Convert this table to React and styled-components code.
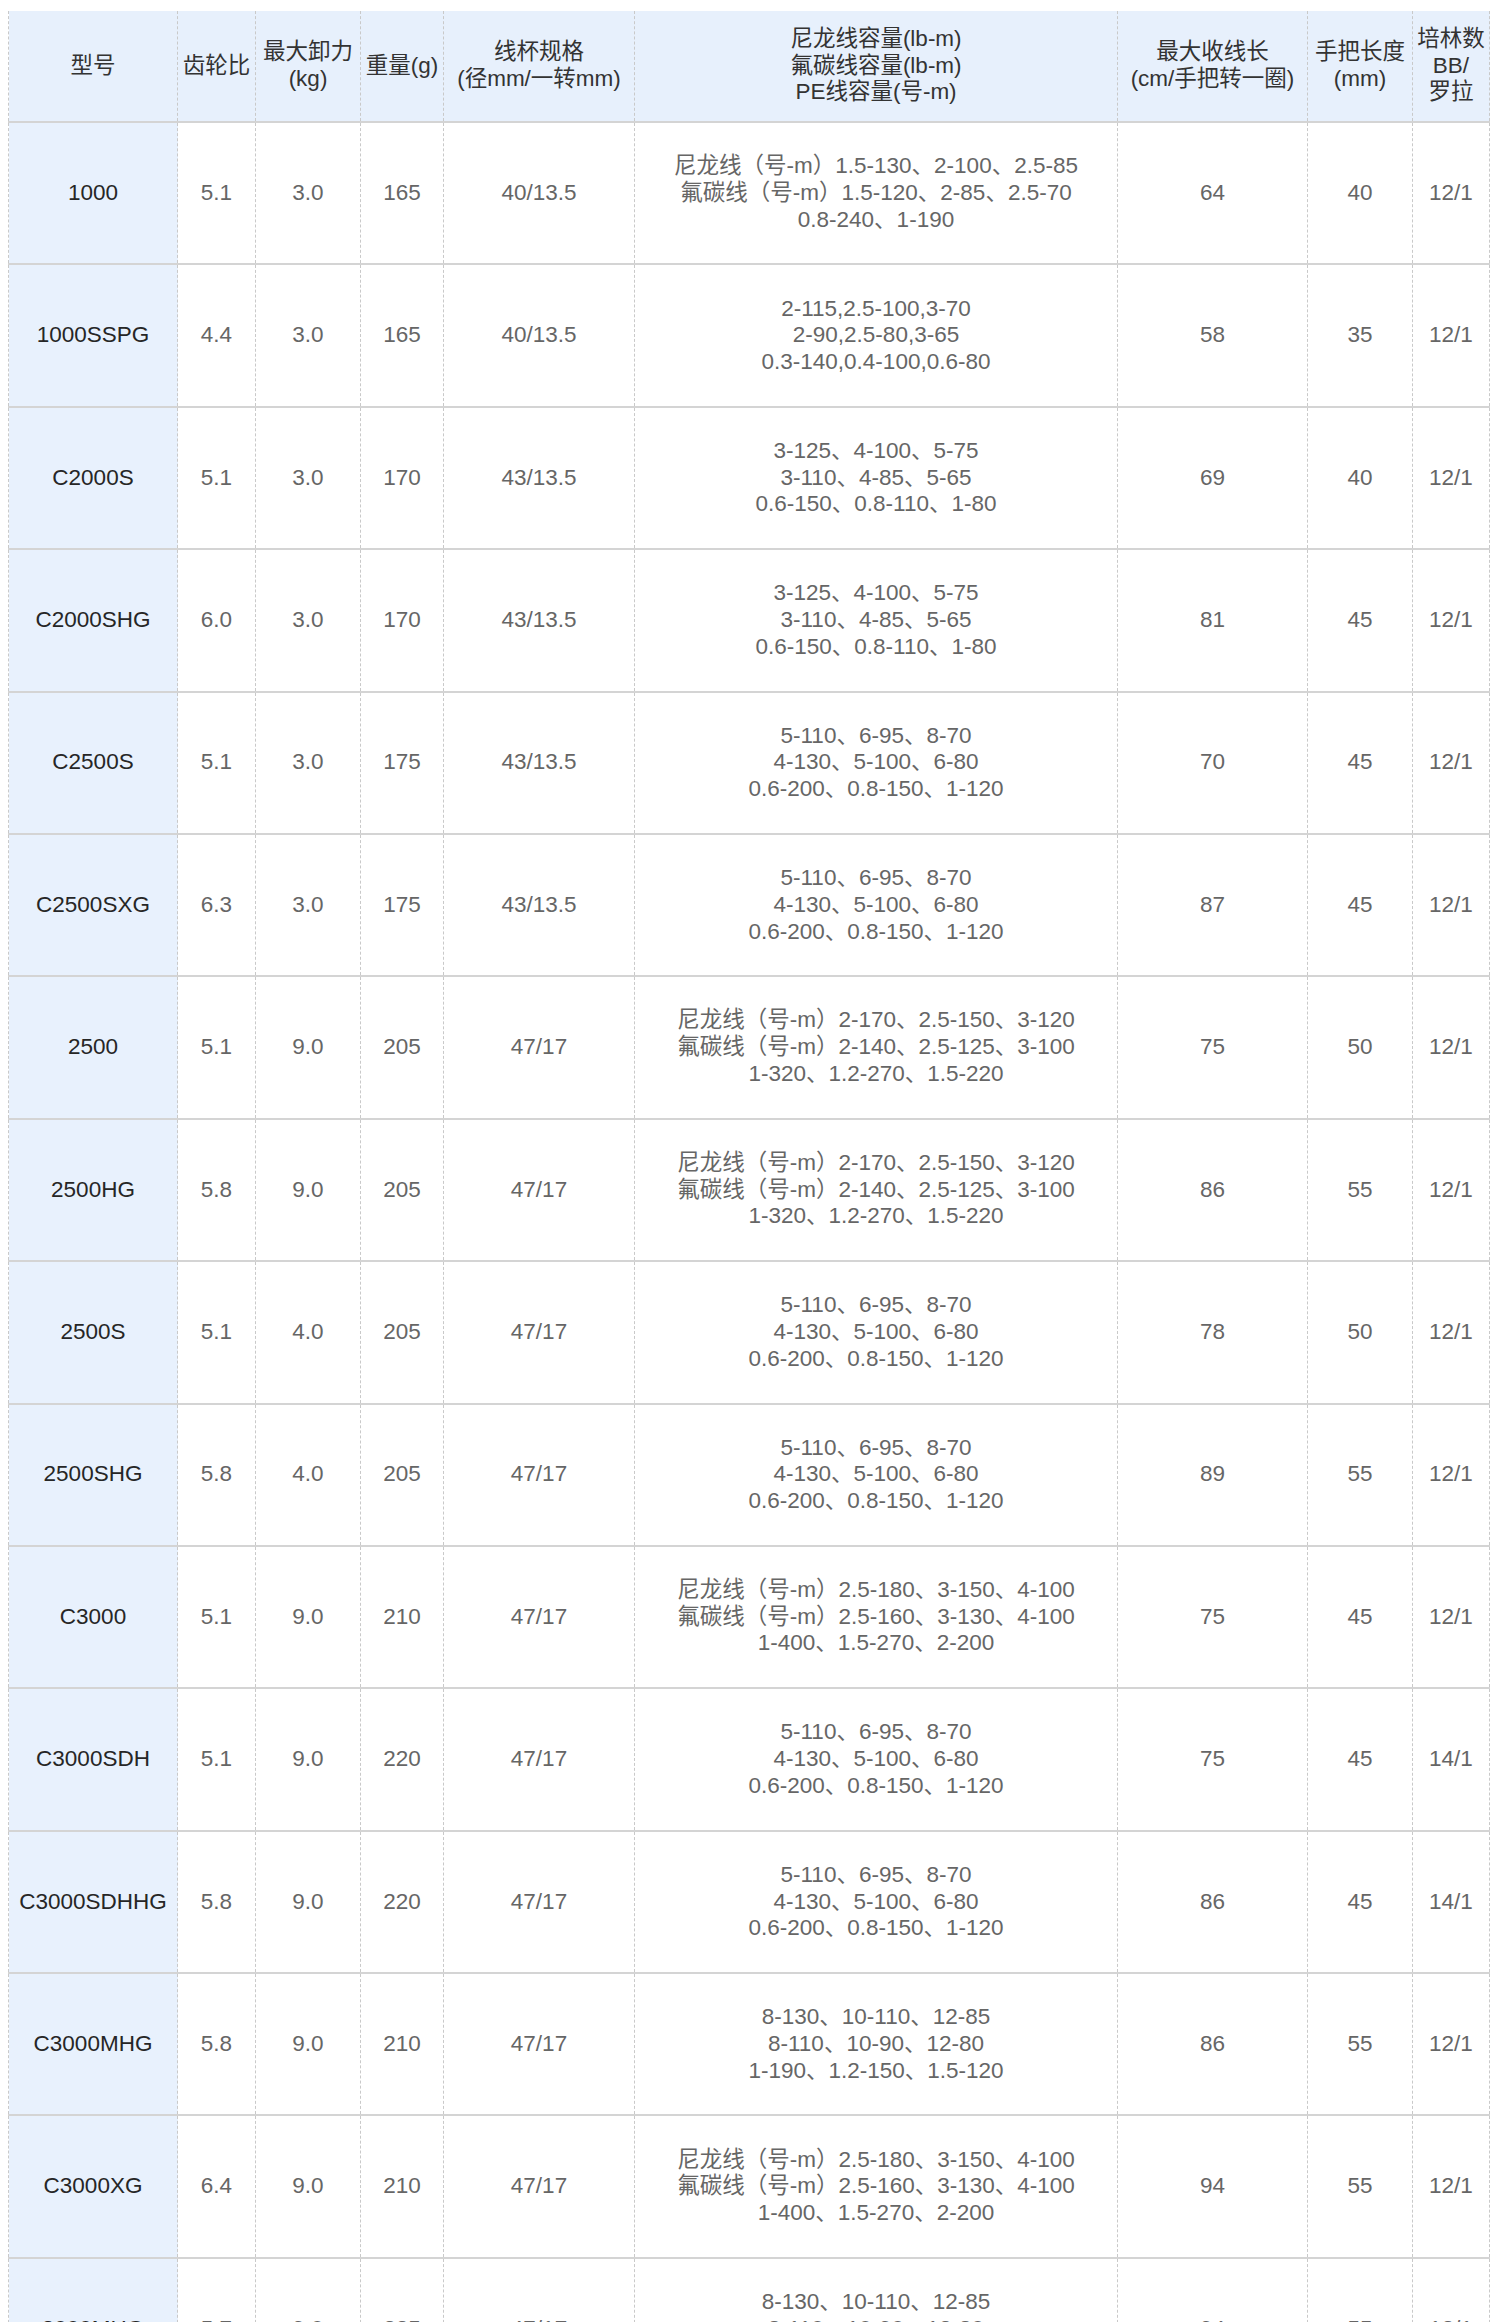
import React from 'react'
import styled, { createGlobalStyle } from 'styled-components'

const GlobalStyle = createGlobalStyle`
  html, body {
    margin: 0;
    padding: 0;
    background: #fff;
  }
  body {
    font-family: 'Liberation Sans', 'Noto Sans CJK SC', sans-serif;
  }
`

const COLORS = {
  HEAD_BG: '#e7f0fc',
  MODEL_BG: '#e8f1fd',
  ROW_LINE: '#d4d4d4',
  COL_LINE: '#c9c9c9',
  HEAD_TEXT: '#333',
  MODEL_TEXT: '#262626',
  TEXT: '#666',
}

const Page = styled.div`
  padding: 11px 11px 0 8px;
`

const SpecTable = styled.table`
  width: 1481px;
  table-layout: fixed;
  border-collapse: collapse;
  font-size: 22.5px;
  line-height: 26.7px;
  text-align: center;
`

const HeadRow = styled.tr`
  height: 111px;
  background: ${COLORS.HEAD_BG};
`

const BodyRow = styled.tr`
  height: 142.4px;
`

const HeadCell = styled.th`
  padding: 0 3px;
  font-weight: normal;
  color: ${COLORS.HEAD_TEXT};
  border-left: 1px dashed ${COLORS.COL_LINE};
  border-right: 1px dashed ${COLORS.COL_LINE};
  border-bottom: 2px solid ${COLORS.ROW_LINE};
  vertical-align: middle;
`

const Cell = styled.td`
  padding: 0 3px;
  color: ${(p) => (p.$model ? COLORS.MODEL_TEXT : COLORS.TEXT)};
  background: ${(p) => (p.$model ? COLORS.MODEL_BG : '#fff')};
  border-left: 1px dashed ${COLORS.COL_LINE};
  border-right: 1px dashed ${COLORS.COL_LINE};
  border-bottom: 2px solid ${COLORS.ROW_LINE};
  vertical-align: middle;
  white-space: nowrap;
`

const widths = [169, 78, 105, 83, 191, 483, 190, 105, 77]

const headers = [
  ['型号'],
  ['齿轮比'],
  ['最大卸力', '(kg)'],
  ['重量(g)'],
  ['线杯规格', '(径mm/一转mm)'],
  ['尼龙线容量(lb-m)', '氟碳线容量(lb-m)', 'PE线容量(号-m)'],
  ['最大收线长', '(cm/手把转一圈)'],
  ['手把长度', '(mm)'],
  ['培林数', 'BB/', '罗拉'],
]

const CAP_1000 = [
  '尼龙线（号-m）1.5-130、2-100、2.5-85',
  '氟碳线（号-m）1.5-120、2-85、2.5-70',
  '0.8-240、1-190',
]
const CAP_SSPG = ['2-115,2.5-100,3-70', '2-90,2.5-80,3-65', '0.3-140,0.4-100,0.6-80']
const CAP_2000 = ['3-125、4-100、5-75', '3-110、4-85、5-65', '0.6-150、0.8-110、1-80']
const CAP_SMALL = ['5-110、6-95、8-70', '4-130、5-100、6-80', '0.6-200、0.8-150、1-120']
const CAP_2500 = [
  '尼龙线（号-m）2-170、2.5-150、3-120',
  '氟碳线（号-m）2-140、2.5-125、3-100',
  '1-320、1.2-270、1.5-220',
]
const CAP_3000 = [
  '尼龙线（号-m）2.5-180、3-150、4-100',
  '氟碳线（号-m）2.5-160、3-130、4-100',
  '1-400、1.5-270、2-200',
]
const CAP_MHG = ['8-130、10-110、12-85', '8-110、10-90、12-80', '1-190、1.2-150、1.5-120']

const rows = [
  ['1000', '5.1', '3.0', '165', '40/13.5', CAP_1000, '64', '40', '12/1'],
  ['1000SSPG', '4.4', '3.0', '165', '40/13.5', CAP_SSPG, '58', '35', '12/1'],
  ['C2000S', '5.1', '3.0', '170', '43/13.5', CAP_2000, '69', '40', '12/1'],
  ['C2000SHG', '6.0', '3.0', '170', '43/13.5', CAP_2000, '81', '45', '12/1'],
  ['C2500S', '5.1', '3.0', '175', '43/13.5', CAP_SMALL, '70', '45', '12/1'],
  ['C2500SXG', '6.3', '3.0', '175', '43/13.5', CAP_SMALL, '87', '45', '12/1'],
  ['2500', '5.1', '9.0', '205', '47/17', CAP_2500, '75', '50', '12/1'],
  ['2500HG', '5.8', '9.0', '205', '47/17', CAP_2500, '86', '55', '12/1'],
  ['2500S', '5.1', '4.0', '205', '47/17', CAP_SMALL, '78', '50', '12/1'],
  ['2500SHG', '5.8', '4.0', '205', '47/17', CAP_SMALL, '89', '55', '12/1'],
  ['C3000', '5.1', '9.0', '210', '47/17', CAP_3000, '75', '45', '12/1'],
  ['C3000SDH', '5.1', '9.0', '220', '47/17', CAP_SMALL, '75', '45', '14/1'],
  ['C3000SDHHG', '5.8', '9.0', '220', '47/17', CAP_SMALL, '86', '45', '14/1'],
  ['C3000MHG', '5.8', '9.0', '210', '47/17', CAP_MHG, '86', '55', '12/1'],
  ['C3000XG', '6.4', '9.0', '210', '47/17', CAP_3000, '94', '55', '12/1'],
  ['3000MHG', '5.7', '9.0', '225', '47/17', CAP_MHG, '94', '55', '12/1'],
]

// массив строк -> строки через <br/>
const Lines = ({ lines }) =>
  lines.map((line, i) => (
    <React.Fragment key={i}>
      {i > 0 && <br />}
      {line}
    </React.Fragment>
  ))

const App = () => {
  return (
    <Page>
      <GlobalStyle />
      <SpecTable>
        <colgroup>
          {widths.map((w, i) => (
            <col key={i} style={{ width: w }} />
          ))}
        </colgroup>
        <thead>
          <HeadRow>
            {headers.map((h, i) => (
              <HeadCell key={i}>
                <Lines lines={h} />
              </HeadCell>
            ))}
          </HeadRow>
        </thead>
        <tbody>
          {rows.map((row) => (
            <BodyRow key={row[0]}>
              {row.map((value, i) => (
                <Cell key={i} $model={i === 0}>
                  {Array.isArray(value) ? <Lines lines={value} /> : value}
                </Cell>
              ))}
            </BodyRow>
          ))}
        </tbody>
      </SpecTable>
    </Page>
  )
}

export default App
